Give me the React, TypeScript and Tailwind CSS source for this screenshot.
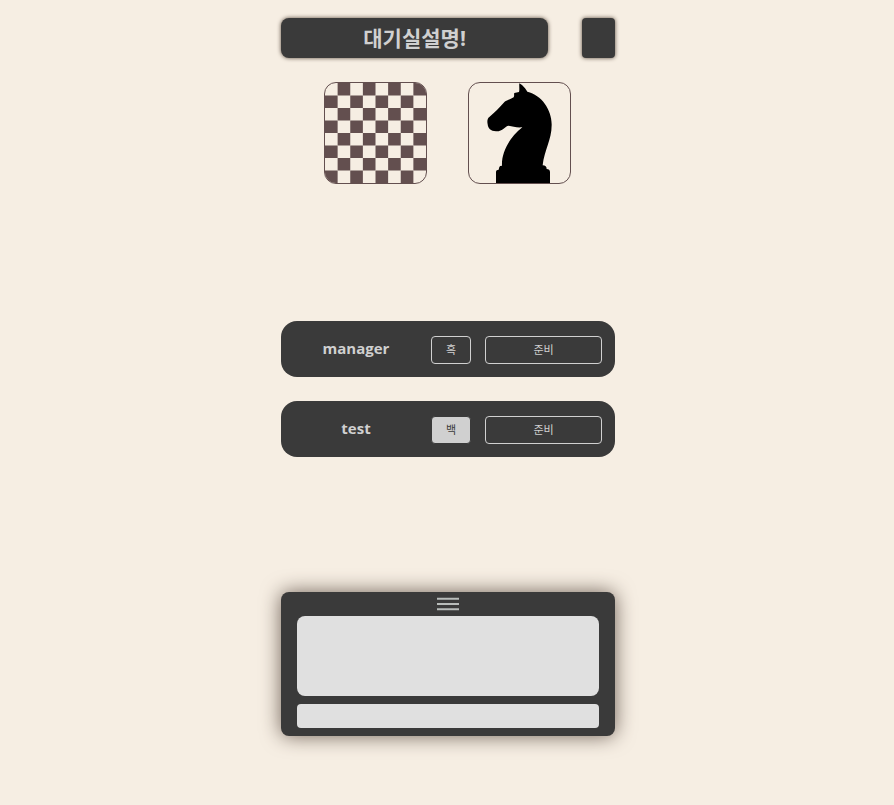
const cells = Array.from({ length: 64 }, (_, i) => ({ col: i % 8, row: Math.floor(i / 8) })).filter(
  ({ col, row }) => (col + row) % 2 === 1,
);

function BoardIcon() {
  return (
    <svg viewBox="0 0 8 8" preserveAspectRatio="none" className="h-full w-full" fill="#634f4f" aria-hidden="true">
      {cells.map(({ col, row }) => (
        <rect key={`${col}-${row}`} x={col} y={row} width="1" height="1" />
      ))}
    </svg>
  );
}

function KnightIcon() {
  return (
    <svg viewBox="27 24 303 300" preserveAspectRatio="none" className="h-full w-full" aria-hidden="true">
      <path d="M108 324V290Q108 284 116 284L118 276Q119 272 126 272C124 235 145 190 187 157C170 159 158 154 146 152C135 153 128 170 108 169C92 169 84 160 83 148C81 140 82 130 88 126C104 112 118 98 134 80C140 75 152 73 161 67C164 62 161 58 163 54L177 51C179 44 177 32 178 25L186 30C193 37 198 43 202 50C245 60 276 105 275 150C275 195 253 225 248 271C256 271 260 275 260 282C266 282 270 285 270 291V324Z" />
    </svg>
  );
}

const modeButton = "h-[102px] w-[103px] overflow-hidden rounded-xl border border-[#634f4f]";

function Player({ name, side }: { name: string; side: "흑" | "백" }) {
  const sideStyle =
    side === "백" ? "border-[#3a3a3a] bg-[#d0d0d0] text-[#3a3a3a]" : "border-[#d0d0d0] text-[#d0d0d0]";
  return (
    <li className="flex h-14 items-center rounded-2xl bg-[#3a3a3a] pr-[13px] text-[#d0d0d0]">
      <span className="flex-1 pb-0.5 text-center text-[15px] leading-5 font-bold">{name}</span>
      <button type="button" className={`mt-0.5 h-7 w-10 rounded border text-[11px] ${sideStyle}`}>
        {side}
      </button>
      <button
        type="button"
        className="mt-0.5 ml-3.5 h-7 w-[117px] rounded border border-[#d0d0d0] text-[11px]"
      >
        준비
      </button>
    </li>
  );
}

export default function App() {
  return (
    <main className="min-h-screen bg-[#f6eee3] pt-[18px] pb-[69px] pl-0.5 font-['Open_Sans','Noto_Sans_CJK_KR',sans-serif]">
      <div className="mx-auto flex w-full max-w-[334px] flex-col">
        <header className="flex justify-between">
          <h1 className="flex h-10 w-4/5 items-center justify-center rounded-lg bg-[#3a3a3a] text-[21px] leading-7 font-bold text-[#d0d0d0] shadow-[0_0_4px_#58493d]">
            대기실설명!
          </h1>
          <button
            type="button"
            aria-label="나가기"
            className="h-10 w-1/10 rounded bg-[#3a3a3a] shadow-[0_0_4px_#58493d]"
          />
        </header>

        <div className="mt-6 flex justify-center gap-[41px] pr-0.5">
          <button type="button" aria-label="체스판" className={modeButton}>
            <BoardIcon />
          </button>
          <button type="button" aria-label="기물" className={modeButton}>
            <KnightIcon />
          </button>
        </div>

        <ul className="mt-[137px] flex flex-col gap-6">
          <Player name="manager" side="흑" />
          <Player name="test" side="백" />
        </ul>

        <section className="mt-[135px] rounded-lg bg-[#3a3a3a] px-4 pb-2 shadow-[0_0_20px_#706258]">
          <button type="button" aria-label="채팅 메뉴" className="flex h-6 w-full items-center justify-center">
            <svg width="22" height="14" viewBox="0 0 22 14" stroke="#b8bcba" strokeWidth="2" aria-hidden="true">
              <path d="M0 1.7H22M0 7H22M0 12.3H22" />
            </svg>
          </button>
          <div role="log" className="h-20 rounded-lg bg-[#e0e0e0]" />
          <input
            type="text"
            aria-label="채팅 입력"
            className="mt-2 block h-6 w-full rounded bg-[#e0e0e0] px-2 text-[11px] text-[#3a3a3a] outline-none"
          />
        </section>
      </div>
    </main>
  );
}
